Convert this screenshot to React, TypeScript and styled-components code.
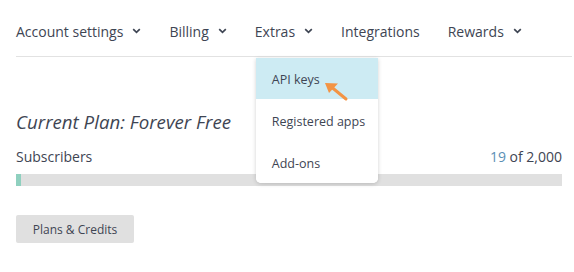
import styled, { createGlobalStyle } from "styled-components";

const GlobalStyle = createGlobalStyle`
  body {
    margin: 0;
    background: #fff;
    font-family: "Open Sans", "Liberation Sans", sans-serif;
    color: #3e4553;
  }
`;

const Page = styled.div`
  padding: 0 0 0 16px;
  width: 574px;
  box-sizing: border-box;
`;

const Nav = styled.nav`
  position: relative;
  display: flex;
  align-items: center;
  gap: 28px;
  height: 57px;
  border-bottom: 1px solid #e2e2e2;
  padding-top: 6px;
  box-sizing: border-box;
  margin-right: 2px;
`;

const NavItem = styled.div`
  position: relative;
  display: flex;
  align-items: center;
  gap: 9px;
  font-size: 14px;
  color: #3e4553;
`;

const Chevron = () => (
  <svg width="9" height="6" viewBox="0 0 9 6">
    <path d="M1.2 1.2 L4.5 4.4 L7.8 1.2" fill="none" stroke="#3e4553" strokeWidth="1.7" />
  </svg>
);

const Menu = styled.div`
  position: absolute;
  top: 36px;
  left: 1px;
  width: 122px;
  background: #fff;
  border-radius: 0 0 5px 5px;
  box-shadow: 0 1px 4px rgba(0, 0, 0, 0.18);
  z-index: 2;
  overflow: hidden;
`;

const MenuItem = styled.div<{ $active?: boolean }>`
  height: ${(p) => (p.$active ? 41 : 42)}px;
  display: flex;
  align-items: center;
  padding: 3px 0 0 16px;
  box-sizing: border-box;
  font-size: 12.5px;
  color: #3e4553;
  background: ${(p) => (p.$active ? "#cdebf3" : "#fff")};
`;

const Arrow = styled.svg`
  position: absolute;
  left: 67px;
  top: 22px;
`;

const Heading = styled.h2`
  margin: 52px 0 0;
  font-size: 18.7px;
  font-style: italic;
  font-weight: 400;
  color: #3e4553;
`;

const StatRow = styled.div`
  display: flex;
  justify-content: space-between;
  align-items: baseline;
  margin-top: 13px;
  width: 546px;
  font-size: 14px;
`;

const Count = styled.span`
  color: #3e4553;
  span {
    color: #5b8fb5;
  }
`;

const Track = styled.div`
  margin-top: 8px;
  width: 546px;
  height: 12px;
  background: #e0e0e0;
`;

const Fill = styled.div`
  height: 100%;
  background: #8fd0bf;
`;

const Button = styled.button`
  margin-top: 29px;
  width: 118px;
  height: 28px;
  border: none;
  border-radius: 2px;
  background: #e0e0e0;
  font-family: "Open Sans", "Liberation Sans", sans-serif;
  font-size: 12px;
  color: #3e4553;
  padding: 0;
`;

const App = () => {
  const used = 19;
  const total = 2000;
  return (
    <>
      <GlobalStyle />
      <Page>
        <Nav>
          <NavItem>
            Account settings <Chevron />
          </NavItem>
          <NavItem>
            Billing <Chevron />
          </NavItem>
          <NavItem>
            Extras <Chevron />
            <Menu>
              <MenuItem $active>API keys</MenuItem>
              <MenuItem>Registered apps</MenuItem>
              <MenuItem>Add-ons</MenuItem>
              <Arrow width="28" height="24" viewBox="0 0 28 24">
                <path d="M23 19 L9 7.5" stroke="#f39444" strokeWidth="3" strokeLinecap="round" />
                <path d="M2 3 L15 3.5 L6 13 Z" fill="#f39444" />
              </Arrow>
            </Menu>
          </NavItem>
          <NavItem>Integrations</NavItem>
          <NavItem>
            Rewards <Chevron />
          </NavItem>
        </Nav>
        <Heading>Current Plan: Forever Free</Heading>
        <StatRow>
          <span>Subscribers</span>
          <Count>
            <span>{used}</span> of 2,000
          </Count>
        </StatRow>
        <Track>
          <Fill style={{ width: `${Math.max(5, (used / total) * 546)}px` }} />
        </Track>
        <Button>Plans &amp; Credits</Button>
      </Page>
    </>
  );
};

export default App;
